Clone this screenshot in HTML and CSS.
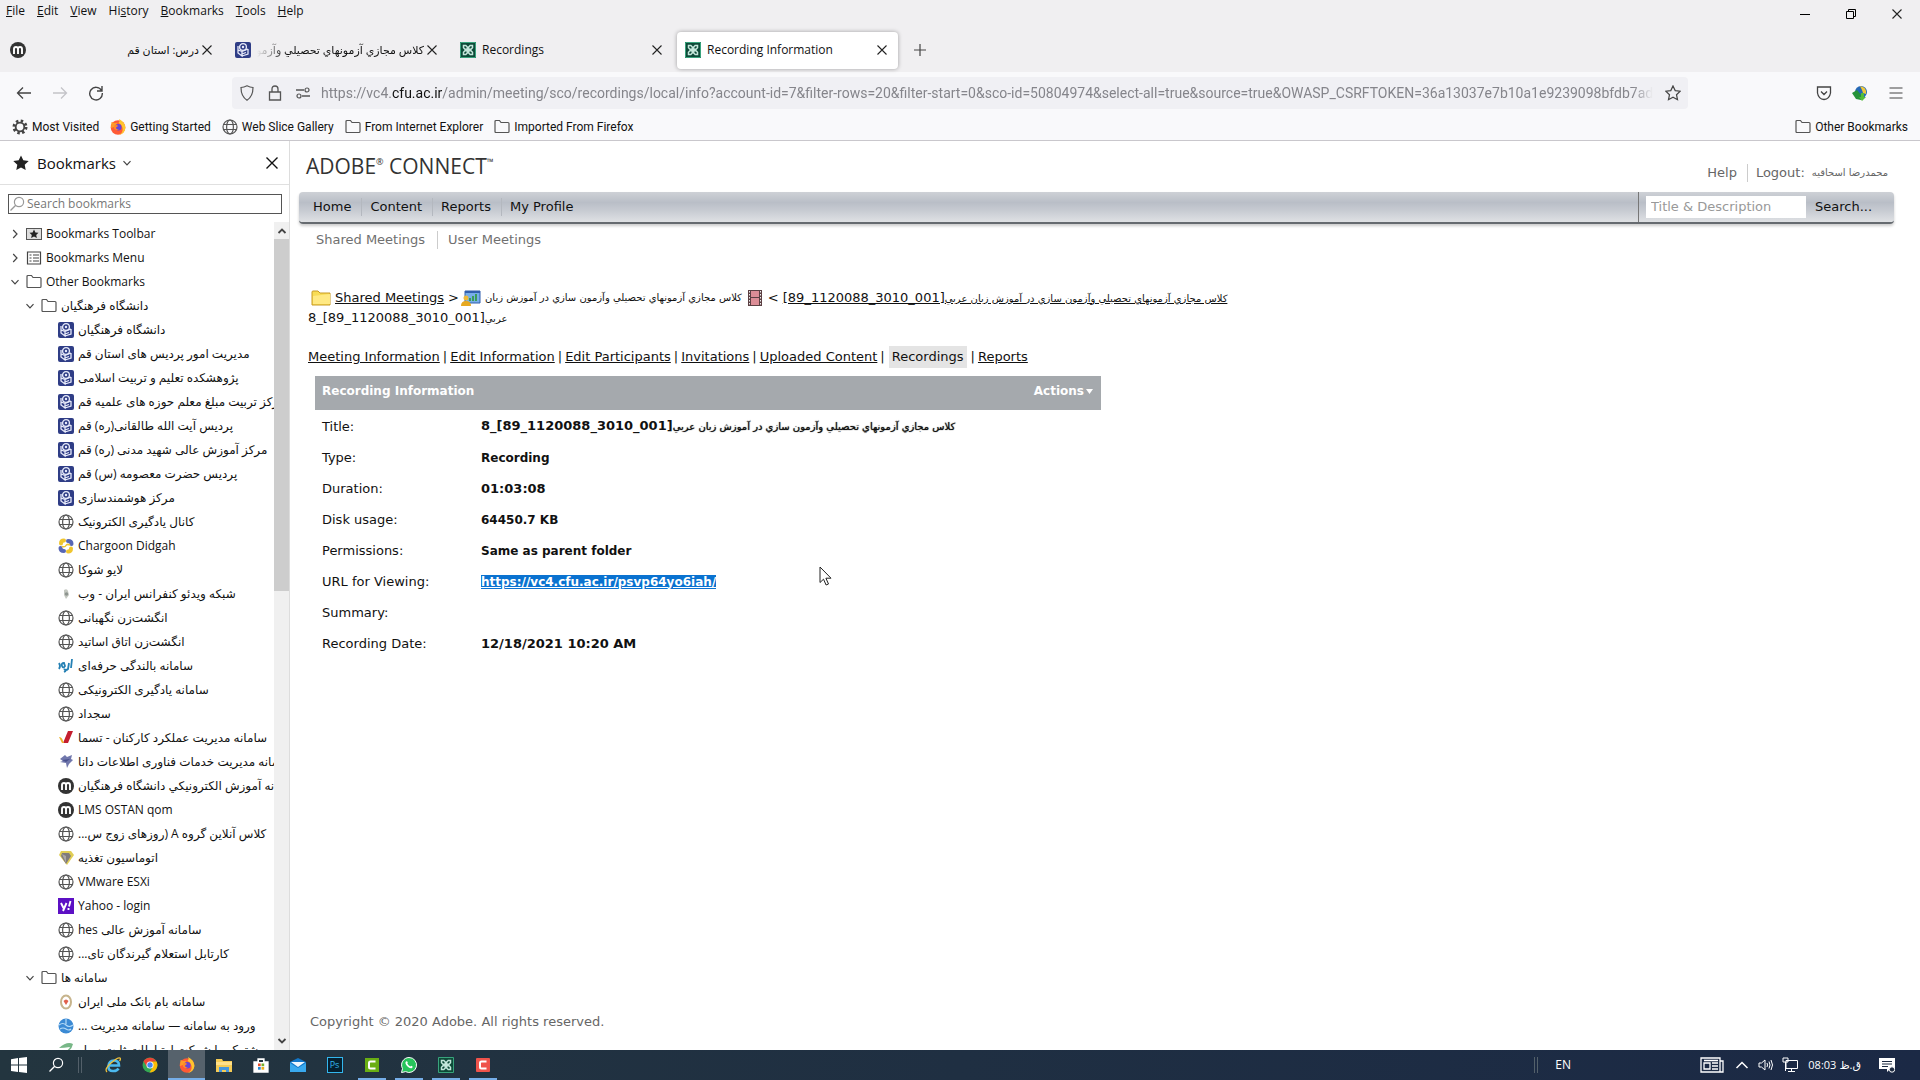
FILE: index.html
```html
<!DOCTYPE html>
<html lang="en">
<head>
<meta charset="utf-8">
<title>Recording Information</title>
<link rel="stylesheet" href="styles.css">
</head>
<body>
<svg class="defs" aria-hidden="true">
  <symbol id="globe" viewBox="0 0 16 16"><g fill="none" stroke="#555" stroke-width="1.2"><circle cx="8" cy="8" r="7"/><ellipse cx="8" cy="8" rx="3.4" ry="7"/><path d="M1.5 5.5h13M1.5 10.5h13"/></g></symbol>
  <symbol id="folder" viewBox="0 0 16 16"><path d="M1 12.5v-10q0-1 1-1h3.500l1.500 2h7q1 0 1 1v8q0 1-1 1H2q-1 0-1-1z" fill="none" stroke="#555" stroke-width="1.200"/></symbol>
  <symbol id="uni" viewBox="0 0 16 16"><rect width="16" height="16" rx="2" fill="#2f3d86"/><g fill="none" stroke="#e8ebfa" stroke-width="1.300"><circle cx="8" cy="5" r="3.400"/><path d="M3 4v7l4 3V9.500L3 8M13 7v5l-6 2M7 9.500l6-2.500M7 12l4-1.500"/></g><circle cx="8" cy="5" r="1.200" fill="#e8ebfa"/></symbol>
  <symbol id="moodle" viewBox="0 0 16 16"><circle cx="8" cy="8" r="8" fill="#333"/><path d="M4 12V7q0-2 2-2t2 2v5M8 7q0-2 2-2t2 2v5" fill="none" stroke="#fff" stroke-width="1.900"/></symbol>
  <symbol id="connect" viewBox="0 0 16 16"><rect width="16" height="16" fill="#0d4a38"/><path d="M.5.500h15v15H.5z" fill="none" stroke="#39a37d"/><g fill="none" stroke="#c3e6da" stroke-width="1.500"><path d="M7.300 7.300H5L3.500 5.800V3.500h2.300L7.300 5zM8.700 7.300H11l1.500-1.500V3.500h-2.300L8.700 5zM7.300 8.700H5l-1.500 1.500v2.300h2.300L7.300 11zM8.700 8.700H11l1.500 1.500v2.300h-2.300L8.700 11z"/></g></symbol>
  <symbol id="close" viewBox="0 0 16 16"><path d="M3.500 3.500l9 9M12.500 3.500l-9 9" stroke="#222" stroke-width="1.100"/></symbol>
  <symbol id="firefox" viewBox="0 0 16 16"><circle cx="8" cy="8.500" r="7.300" fill="#ff5a35"/><path d="M9 0q6 3 6.500 9-1 6-7 7 5-2 4-7-1-4-4-5 2-2 .5-4z" fill="#ffc52e"/><path d="M1.500 3l3 1 3-.3-1 2L4 8l-3 1z" fill="#ff9a28"/><circle cx="8.300" cy="8.300" r="3.200" fill="#6546d8"/><path d="M4 6.500q3-1 4 .5l-2 1.500q0 2 3 2-3 2-5-1z" fill="#ff8a26"/></symbol>
  <symbol id="down" viewBox="0 0 10 10"><path d="M1.500 3.200L5 6.800l3.500-3.600" fill="none" stroke="#444" stroke-width="1.200"/></symbol>
  <symbol id="right" viewBox="0 0 10 10"><path d="M3.200 1L7 5 3.200 9" fill="none" stroke="#444" stroke-width="1.200"/></symbol>
  <symbol id="lens" viewBox="0 0 16 16"><circle cx="10" cy="6" r="4.600" fill="none" stroke="currentColor" stroke-width="1.200"/><path d="M6.700 9.300L1.500 14.500" stroke="currentColor" stroke-width="1.300"/></symbol>
</svg>

<header class="chrome">
  <div class="topline">
    <nav class="menubar">
      <button><u>F</u>ile</button><button><u>E</u>dit</button><button><u>V</u>iew</button><button>Hi<u>s</u>tory</button><button><u>B</u>ookmarks</button><button><u>T</u>ools</button><button><u>H</u>elp</button>
    </nav>
    <div class="wincontrols">
      <button aria-label="Minimize"><svg viewBox="0 0 16 16"><path d="M3 8.500h10" stroke="#000"/></svg></button>
      <button aria-label="Restore"><svg viewBox="0 0 16 16"><path d="M3.500 5.500h7v7h-7zM5.500 5.500v-2h7v7h-2" fill="none" stroke="#000"/></svg></button>
      <button aria-label="Close"><svg><use href="#close"/></svg></button>
    </div>
  </div>
  <div class="tabs">
    <div class="tab"><svg><use href="#moodle"/></svg><span class="tabtitle" dir="rtl">درس: استان قم</span><button aria-label="Close tab"><svg><use href="#close"/></svg></button></div>
    <div class="tab"><svg><use href="#uni"/></svg><span class="tabtitle fade" dir="rtl">کلاس مجازي آزمونهاي تحصیلي وآزمون سازي</span><button aria-label="Close tab"><svg><use href="#close"/></svg></button></div>
    <div class="tab"><svg><use href="#connect"/></svg><span class="tabtitle">Recordings</span><button aria-label="Close tab"><svg><use href="#close"/></svg></button></div>
    <div class="tab active"><svg><use href="#connect"/></svg><span class="tabtitle">Recording Information</span><button aria-label="Close tab"><svg><use href="#close"/></svg></button></div>
    <button class="newtab" aria-label="New tab"><svg viewBox="0 0 16 16"><path d="M8 2v12M2 8h12" stroke="#444" stroke-width="1.200"/></svg></button>
  </div>
  <div class="navbar">
    <div class="navbuttons">
      <button aria-label="Back"><svg viewBox="0 0 16 16"><path d="M15 8H1.500M7 2.500L1.500 8 7 13.500" fill="none" stroke="#444" stroke-width="1.300"/></svg></button>
      <button aria-label="Forward"><svg viewBox="0 0 16 16"><path d="M1 8h13.500M9 2.500L14.500 8 9 13.500" fill="none" stroke="#c4c4c8" stroke-width="1.300"/></svg></button>
      <button aria-label="Reload"><svg viewBox="0 0 16 16"><path d="M13.500 5.500A6.300 6.300 0 1 0 14.300 8M14 1v5H9" fill="none" stroke="#444" stroke-width="1.400"/></svg></button>
    </div>
    <div class="urlbar">
      <svg viewBox="0 0 16 16"><path d="M8 .8q3 1.500 6 1.700 0 9-6 12.700Q2 11.500 2 2.500q3-.2 6-1.700z" fill="none" stroke="#555" stroke-width="1.200"/></svg>
      <svg viewBox="0 0 16 16"><path d="M2.500 7h11v8h-11zM5 7V4q0-3 3-3t3 3v3" fill="none" stroke="#555" stroke-width="1.300"/></svg>
      <svg viewBox="0 0 16 16"><path d="M1 5h8M7 11h8" stroke="#555" stroke-width="1.300"/><circle cx="12" cy="5" r="2" fill="none" stroke="#555" stroke-width="1.200"/><circle cx="4" cy="11" r="2" fill="none" stroke="#555" stroke-width="1.200"/></svg>
      <span class="url">https://vc4.<b>cfu.ac.ir</b>/admin/meeting/sco/recordings/local/info?account-id=7&amp;filter-rows=20&amp;filter-start=0&amp;sco-id=50804974&amp;select-all=true&amp;source=true&amp;OWASP_CSRFTOKEN=36a13037e7b10a1e9239098bfdb7ad5e</span>
      <svg viewBox="0 0 16 16"><path d="M8 .9l2.200 4.700 5 .6-3.700 3.500 1 5L8 12.200l-4.500 2.500 1-5L.8 6.200l5-.6z" fill="none" stroke="#444" stroke-width="1.200"/></svg>
    </div>
    <div class="navright">
      <button aria-label="Pocket"><svg viewBox="0 0 16 16"><path d="M1.500 2h13v6q-1 6-6.500 6.500Q2.500 14 1.500 8zM5 6.500l3 3 3-3" fill="none" stroke="#444" stroke-width="1.300"/></svg></button>
      <button aria-label="Download manager"><svg viewBox="0 0 16 16"><circle cx="9" cy="7" r="6" fill="#2568b5"/><path d="M8 1q7 1 6 8l-3-1-1-3z" fill="#f0c83a"/><path d="M0 8l5-3 4 5 3-1-3 6-5-1z" fill="#26933a"/><path d="M9 8h3v4h2l-4 4-3-4h2z" fill="#53bd3a"/></svg></button>
      <button aria-label="Menu"><svg viewBox="0 0 16 16"><path d="M1.500 3h13M1.500 8h13M1.500 13h13" stroke="#444" stroke-width="1.200"/></svg></button>
    </div>
  </div>
  <nav class="bookmarkbar">
    <a href="#"><svg viewBox="0 0 16 16"><circle cx="8" cy="8" r="6" fill="none" stroke="#444" stroke-width="3" stroke-dasharray="2.400 2.310"/><circle cx="8" cy="8" r="4.300" fill="none" stroke="#444" stroke-width="1.800"/></svg>Most Visited</a>
    <a href="#"><svg><use href="#firefox"/></svg>Getting Started</a>
    <a href="#"><svg><use href="#globe"/></svg>Web Slice Gallery</a>
    <a href="#"><svg><use href="#folder"/></svg>From Internet Explorer</a>
    <a href="#"><svg><use href="#folder"/></svg>Imported From Firefox</a>
    <a href="#" class="last"><svg><use href="#folder"/></svg>Other Bookmarks</a>
  </nav>
</header>

<div class="middle">
  <aside class="sidebar">
    <div class="sidehead">
      <svg viewBox="0 0 16 16"><path d="M8 .4l2.300 4.900 5.400.7-4 3.700 1 5.300L8 12.400 3.300 15l1-5.300-4-3.700 5.400-.7z" fill="#222"/></svg>
      <h2>Bookmarks</h2><svg class="tw"><use href="#down"/></svg>
      <button aria-label="Close sidebar"><svg viewBox="0 0 16 16"><path d="M2.500 2.500l11 11M13.500 2.500l-11 11" stroke="#111" stroke-width="1.400"/></svg></button>
    </div>
    <label class="sidesearch"><svg><use href="#lens"/></svg><input type="text" placeholder="Search bookmarks" aria-label="Search bookmarks"></label>
    <div class="treewrap">
      <ul class="tree">
        <li><svg class="tw"><use href="#right"/></svg><svg viewBox="0 0 16 16"><rect x=".5" y="2.500" width="15" height="11" fill="#ddd" stroke="#555"/><path d="M8 3.500l1.400 3 3.100.3-2.300 2.100.7 3.200L8 10.500l-2.900 1.600.7-3.200-2.300-2.100 3.100-.3z" fill="#222"/></svg>Bookmarks Toolbar</li>
        <li><svg class="tw"><use href="#right"/></svg><svg viewBox="0 0 16 16"><path d="M1.500 2h13v12h-13zM3.500 5h2M3.500 8h2M3.500 11h2M7 5h6M7 8h6M7 11h6" fill="none" stroke="#444" stroke-width="1.200"/></svg>Bookmarks Menu</li>
        <li><svg class="tw"><use href="#down"/></svg><svg><use href="#folder"/></svg>Other Bookmarks</li>
        <li class="l2"><svg class="tw"><use href="#down"/></svg><svg><use href="#folder"/></svg><span dir="rtl">دانشگاه فرهنگیان</span></li>
        <li class="l3"><svg><use href="#uni"/></svg><span dir="rtl">دانشگاه فرهنگیان</span></li>
        <li class="l3"><svg><use href="#uni"/></svg><span dir="rtl">مدیریت امور پردیس های استان قم</span></li>
        <li class="l3"><svg><use href="#uni"/></svg><span dir="rtl">پژوهشکده تعلیم و تربیت اسلامی</span></li>
        <li class="l3"><svg><use href="#uni"/></svg><span dir="rtl">مرکز تربیت مبلغ معلم حوزه های علمیه قم</span></li>
        <li class="l3"><svg><use href="#uni"/></svg><span dir="rtl">پردیس آیت الله طالقانی(ره) قم</span></li>
        <li class="l3"><svg><use href="#uni"/></svg><span dir="rtl">مرکز آموزش عالی شهید مدنی (ره) قم</span></li>
        <li class="l3"><svg><use href="#uni"/></svg><span dir="rtl">پردیس حضرت معصومه (س) قم</span></li>
        <li class="l3"><svg><use href="#uni"/></svg><span dir="rtl">مرکز هوشمندسازی</span></li>
        <li class="l3"><svg><use href="#globe"/></svg><span dir="rtl">کانال یادگیری الکترونیک</span></li>
        <li class="l3"><svg viewBox="0 0 16 16"><g fill="none" stroke-width="4" stroke-linecap="round"><path d="M3 5.500q0-3 3-3" stroke="#f0c52e"/><path d="M10 3q3.500 0 3.500 3" stroke="#5766b5"/><path d="M13 10.500q0 3-3 3" stroke="#f0c52e"/><path d="M6 13q-3.500 0-3.500-3" stroke="#5766b5"/></g><path d="M4 8.500q3 1 4-1t4-.5" fill="none" stroke="#f0c52e" stroke-width="1.500"/></svg>Chargoon Didgah</li>
        <li class="l3"><svg><use href="#globe"/></svg><span dir="rtl">لایو شوکا</span></li>
        <li class="l3"><svg viewBox="0 0 16 16"><path d="M6 4q3-2 4 1l1 4-3 4-2-4z" fill="#c3c7c0"/><circle cx="8.500" cy="8" r="1.700" fill="#8d948f"/></svg><span dir="rtl">شبکه ویدئو کنفرانس ایران - وب</span></li>
        <li class="l3"><svg><use href="#globe"/></svg><span dir="rtl">انگشت‌زن نگهبانی</span></li>
        <li class="l3"><svg><use href="#globe"/></svg><span dir="rtl">انگشت‌زن اتاق اساتید</span></li>
        <li class="l3"><svg viewBox="0 0 16 16"><path d="M14 1l-1 9M11 5l-1 6q-2 2-4 0M6 5q-3 0-2 3t3 0zM1 5q2 3 0 6M6 14l2-1" fill="none" stroke="#2580b4" stroke-width="1.800"/></svg><span dir="rtl">سامانه بالندگی حرفه‌ای</span></li>
        <li class="l3"><svg><use href="#globe"/></svg><span dir="rtl">سامانه یادگیری الکترونیکی</span></li>
        <li class="l3"><svg><use href="#globe"/></svg><span dir="rtl">سجداد</span></li>
        <li class="l3"><svg viewBox="0 0 16 16"><path d="M10 1h5l-5 12H5z" fill="#c41e2f"/><path d="M1 7q3 0 4 4l1 2H4z" fill="#eeb32c"/></svg><span dir="rtl">سامانه مدیریت عملکرد کارکنان - تسما</span></li>
        <li class="l3"><svg viewBox="0 0 16 16"><path d="M2 5l5-4 2 2 5-2-1 4 2 1-4 4-2 4-1-5-6-1 3-1z" fill="#7077ac"/><path d="M4 6l8-1-4 3z" fill="#48508e"/></svg><span dir="rtl">سامانه مدیریت خدمات فناوری اطلاعات دانا</span></li>
        <li class="l3"><svg><use href="#moodle"/></svg><span dir="rtl">سامانه آموزش الکترونیکي دانشگاه فرهنگیان</span></li>
        <li class="l3"><svg><use href="#moodle"/></svg>LMS OSTAN qom</li>
        <li class="l3"><svg><use href="#globe"/></svg><span dir="rtl">کلاس آنلاین گروه A (روزهای زوج س...</span></li>
        <li class="l3"><svg viewBox="0 0 16 16"><path d="M3 1h10l3 4-7 10L1 5z" fill="#e1ce55"/><path d="M4 3h7l2 3-5 8-5-8z" fill="#807b7c"/><path d="M4 4l4 2v7z" fill="#aaa6a5"/></svg><span dir="rtl">اتوماسیون تغذیه</span></li>
        <li class="l3"><svg><use href="#globe"/></svg>VMware ESXi</li>
        <li class="l3"><svg viewBox="0 0 16 16"><rect width="16" height="16" fill="#5c10c4"/><path d="M3 5l2.500 5M8.500 5L5 13M12.500 3L11 8.500M10.500 10v2" stroke="#fff" stroke-width="1.900"/></svg>Yahoo - login</li>
        <li class="l3"><svg><use href="#globe"/></svg><span dir="rtl">سامانه آموزش عالی hes</span></li>
        <li class="l3"><svg><use href="#globe"/></svg><span dir="rtl">کارتابل استعلام گیرندگان تای...</span></li>
        <li class="l2"><svg class="tw"><use href="#down"/></svg><svg><use href="#folder"/></svg><span dir="rtl">سامانه ها</span></li>
        <li class="l3"><svg viewBox="0 0 16 16"><ellipse cx="8" cy="8" rx="5" ry="6.500" fill="#fff" stroke="#c7b48c" stroke-width="2"/><path d="M5.500 7q2.500-3 5 0l-2.500 4z" fill="#e0604c"/></svg><span dir="rtl">سامانه بام بانک ملی ایران</span></li>
        <li class="l3"><svg viewBox="0 0 16 16"><circle cx="8" cy="8" r="7.500" fill="#3b8ad4"/><path d="M1 7q4-3 7 0t7 0M2 11q3-2 6 0t5 0M8 1v5" fill="none" stroke="#b6dcf8" stroke-width="1.200"/></svg><span dir="rtl">ورود به سامانه — سامانه مدیریت ...</span></li>
        <li class="l3"><svg viewBox="0 0 16 16"><path d="M1 6q8-7 14-4-2 8-9 8 5-2 6-5-6 1-11 1z" fill="#78b787"/></svg><span dir="rtl">مشترک ما شرکت ارتباطات ثابت سیار</span></li>
      </ul>
      <div class="scroll"><svg viewBox="0 0 10 10"><path d="M1.500 7L5 3.500 8.500 7" fill="none" stroke="#444" stroke-width="1.800"/></svg><i class="thumb"></i><svg viewBox="0 0 10 10"><path d="M1.500 3L5 6.500 8.500 3" fill="none" stroke="#444" stroke-width="1.800"/></svg></div>
    </div>
  </aside>

  <main class="page">
    <div class="brand">
      <h1>ADOBE<sup>®</sup> CONNECT<sup>™</sup></h1>
      <div class="account"><a href="#">Help</a><a href="#" class="logout">Logout:</a><span class="fa" dir="rtl">محمدرضا اسحاقیه</span></div>
    </div>
    <div class="mainnav">
      <nav><a href="#">Home</a><a href="#">Content</a><a href="#">Reports</a><a href="#">My Profile</a></nav>
      <form class="find"><input type="text" placeholder="Title &amp; Description" aria-label="Title &amp; Description"><button type="button">Search...</button></form>
    </div>
    <nav class="subnav"><a href="#">Shared Meetings</a><a href="#">User Meetings</a></nav>

    <div class="crumbs">
      <div class="crumbline">
        <svg class="ic" viewBox="0 0 20 16"><path d="M1 2q0-1 1-1h5l2 2h10v12H1z" fill="#f8dc55" stroke="#c79a25"/><path d="M2 6l17-2v10H2z" fill="#ffe983"/></svg>
        <a href="#">Shared Meetings</a><span class="gt">&gt;</span>
        <svg viewBox="0 0 20 16"><path d="M4 1h15v12H4z" fill="#77aee8" stroke="#315fae"/><path d="M4 2h15" stroke="#315fae" stroke-width="2"/><path d="M9 11V8M12 11V6M15 11V4" stroke="#3a9c58" stroke-width="2"/><circle cx="5" cy="8" r="2.500" fill="#efba39"/><path d="M0 16q0-5 5-5t5 5z" fill="#e7a920"/></svg>
        <span class="fa" dir="rtl">کلاس مجازي آزمونهاي تحصیلي وآزمون سازي در آموزش زبان</span>
        <svg class="film" viewBox="0 0 14 16"><path d="M0 0h14v16H0z" fill="#5c4043"/><path d="M3 1h8v6H3zM3 8h8v7H3z" fill="#dc8d96"/><path d="M1.500 1v15M12.500 1v15" stroke="#eee" stroke-dasharray="1.500 1.500"/></svg>
        <span>&lt;</span>
        <a href="#" class="mix"><span>[89_1120088_3010_001]</span><span class="fa" dir="rtl">کلاس مجازي آزمونهاي تحصیلي وآزمون سازي در آموزش زبان عربي</span></a>
      </div>
      <div class="crumbline"><span class="mix"><span>8_[89_1120088_3010_001]</span><span class="fa" dir="rtl">عربي</span></span></div>
    </div>

    <nav class="sections"><a href="#">Meeting Information</a><span>|</span><a href="#">Edit Information</a><span>|</span><a href="#">Edit Participants</a><span>|</span><a href="#">Invitations</a><span>|</span><a href="#">Uploaded Content</a><span>|</span><a href="#" class="here">Recordings</a><span>|</span><a href="#">Reports</a></nav>

    <section class="info">
      <div class="infohead"><h3>Recording Information</h3><button>Actions<svg viewBox="0 0 10 10"><path d="M2 3h7L5.500 8z" fill="#fff"/></svg></button></div>
      <table>
        <tr><th>Title:</th><td class="num"><span class="mix"><span>8_[89_1120088_3010_001]</span><span class="fa" dir="rtl">کلاس مجازي آزمونهاي تحصیلي وآزمون سازي در آموزش زبان عربي</span></span></td></tr>
        <tr><th>Type:</th><td>Recording</td></tr>
        <tr><th>Duration:</th><td class="num">01:03:08</td></tr>
        <tr><th>Disk usage:</th><td>64450.7 KB</td></tr>
        <tr><th>Permissions:</th><td>Same as parent folder</td></tr>
        <tr><th>URL for Viewing:</th><td><a href="#" class="selected">https://vc4.cfu.ac.ir/psvp64yo6iah/</a></td></tr>
        <tr><th>Summary:</th><td></td></tr>
        <tr><th>Recording Date:</th><td class="num">12/18/2021 10:20 AM</td></tr>
      </table>
    </section>
    <footer>Copyright © 2020 Adobe. All rights reserved.</footer>
    <svg class="pointer" viewBox="0 0 13 20"><path d="M1 1v15.500l3.500-3.300 2.600 5.800 2.400-1-2.600-5.800H12z" fill="#fff" stroke="#222"/></svg>
  </main>
</div>

<div class="taskbar">
  <div class="apps">
    <button aria-label="Start"><svg viewBox="0 0 16 16"><path d="M0 2.200L7 1v6.600H0zM8 .9L16 0v7.600H8zM0 8.500h7V15l-7-1zM8 8.500h8V16l-8-1z" fill="#fff"/></svg></button>
    <button aria-label="Search"><svg><use href="#lens"/></svg></button>
    <i class="grip"></i>
    <button aria-label="Internet Explorer"><svg viewBox="0 0 16 16"><path d="M3.500 8.500H14Q14 3.500 9 3.500T3.500 9t5.200 5q3.300 0 4.800-2.500" fill="none" stroke="#4cb9ee" stroke-width="2.600"/><path d="M2 15q-3-3 4-9t9-5q1 1-.5 3" fill="none" stroke="#f0c23c" stroke-width="1.300"/></svg></button>
    <button aria-label="Chrome"><svg viewBox="0 0 16 16"><circle cx="8" cy="8" r="7.500" fill="#34a853"/><path d="M1.500 4.300A7.500 7.500 0 0 1 14.500 4.500L8 5l-3 5z" fill="#ea4335"/><path d="M14.500 4.500A7.500 7.500 0 0 1 7.500 15.500L11 10 9 4.700z" fill="#fbbc05"/><circle cx="8" cy="8" r="3.500" fill="#fff"/><circle cx="8" cy="8" r="2.700" fill="#4285f4"/></svg></button>
    <button class="current" aria-label="Firefox"><svg><use href="#firefox"/></svg></button>
    <button aria-label="File Explorer"><svg viewBox="0 0 16 16"><path d="M0 2h6l1 2h9v11H0z" fill="#f5cb55"/><path d="M0 5h16v3H0z" fill="#ffe08a"/><path d="M3 15v-5h10v5h-3v-2H6v2z" fill="#4697dd"/></svg></button>
    <button aria-label="Store"><svg viewBox="0 0 16 16"><path d="M1 5h14v10H1zM5 5V2h6v3" fill="#fff" stroke="#fff" stroke-width="1.300"/><path d="M6 3h4v2H6z" fill="#23343f"/><path d="M5 6.500h2.700v2.700H5z" fill="#e84c28"/><path d="M8.500 6.500h2.700v2.700H8.500z" fill="#77b02a"/><path d="M5 10h2.700v2.700H5z" fill="#2388d4"/><path d="M8.500 10h2.700v2.700H8.500z" fill="#f0ae1b"/></svg></button>
    <button aria-label="Mail"><svg viewBox="0 0 16 16"><path d="M0 5l8-4 8 4v10H0z" fill="#1277c9"/><path d="M1 5h14L8 10z" fill="#eef7ff"/><path d="M0 6l8 5 8-5v9H0z" fill="#39a9ee"/></svg></button>
    <button aria-label="Photoshop"><span class="ps">Ps</span></button>
    <button class="open" aria-label="Camtasia"><svg viewBox="0 0 16 16"><rect x="1" y="1" width="14" height="14" fill="#69ae13"/><path d="M11.500 4.500H6.500q-1.500 0-1.500 1.500v4q0 1.500 1.500 1.500h5" fill="none" stroke="#fff" stroke-width="2"/></svg></button>
    <button class="open" aria-label="WhatsApp"><svg viewBox="0 0 16 16"><path d="M8 .5A7.500 7.500 0 1 1 4.500 14.600L.5 15.600l1-4A7.500 7.500 0 0 1 8 .5z" fill="#27c45b" stroke="#fff"/><path d="M5 4.500q1-1 1.800 1l-.5 1q1 2 3 3l1-.8q2.300.8.7 2.300Q9 12 6 9 3.500 6 5 4.500z" fill="#fff"/></svg></button>
    <button class="open" aria-label="Adobe Connect"><svg><use href="#connect"/></svg></button>
    <button class="open" aria-label="Recorder"><svg viewBox="0 0 16 16"><rect x="1" y="1" width="14" height="14" rx="1" fill="#ef534b"/><path d="M11.500 4.500H6.500q-1.500 0-1.500 1.500v4q0 1.500 1.500 1.500h5" fill="none" stroke="#fff" stroke-width="2"/></svg></button>
  </div>
  <div class="tray">
    <i class="grip"></i><span class="lang">EN</span>
    <svg class="wide" viewBox="0 0 24 16"><path d="M1 1h19v14H1zM20 4h3v11h-3M4 6h6v6H4zM12 6h6M12 9h6M12 12h6M4 3.500h14" fill="none" stroke="#fff" stroke-width="1.300"/></svg>
    <svg viewBox="0 0 16 16"><path d="M2.500 11L8 5.500l5.500 5.500" fill="none" stroke="#fff" stroke-width="1.500"/></svg>
    <svg viewBox="0 0 16 16"><path d="M1 6h2.500L7 3v10l-3.500-3H1zM9 6q1 2 0 4M11 4.500q2 3.500 0 7M13 3q3 5 0 10" fill="none" stroke="#fff"/></svg>
    <svg viewBox="0 0 16 16"><path d="M4 3.500h11.500v8H4zM9.500 12v2.500M6 14.500h7M1 1h5v4H1zM3.500 5v9" fill="none" stroke="#fff"/></svg>
    <span class="clock"><span>08:03</span><span dir="rtl">ق.ظ</span></span>
    <svg viewBox="0 0 16 16"><path d="M0 1h16v11h-5l-3 3v-3H0z" fill="#fff"/><path d="M3 4.500h10M3 7h10M3 9.500h6" stroke="#1c2a40"/><circle cx="13" cy="12.500" r="2.700" fill="#1c2a40" stroke="#fff"/></svg>
  </div>
</div>
</body>
</html>
```
FILE: styles.css
```css
* { box-sizing: border-box; }
body {
  margin: 0;
  height: 100vh;
  display: flex;
  flex-direction: column;
  overflow: hidden;
  background: #fff;
  color: #111;
  font: 12px/16px "Open Sans", "DejaVu Sans", sans-serif;
}
button { border: 0; padding: 0; background: none; font: inherit; color: inherit; display: flex; align-items: center; justify-content: center; }
a { color: inherit; text-decoration: none; }
svg { width: 16px; height: 16px; flex: none; }
h1, h2, h3 { margin: 0; font-weight: 400; }
.defs { position: absolute; width: 0; height: 0; }
.tw { width: 10px; height: 10px; }

/* Browser chrome */
.chrome { flex: none; background: #f9f9fb; border-bottom: 1px solid #c9c7cc; }
.topline { display: flex; justify-content: space-between; height: 28px; background: #f0eff1; }
.menubar { display: flex; gap: 12px; padding: 3px 6px 1px; height: 20px; }
.wincontrols { display: flex; align-items: center; gap: 30px; padding-right: 15px; }
.tabs { display: flex; align-items: center; height: 44px; background: #f0eff1; padding-left: 2px; gap: 4px; }
.tab { display: flex; align-items: center; gap: 6px; width: 221px; height: 37px; padding: 0 8px; border-radius: 4px; }
.tab.active { background: #fff; box-shadow: 0 0 4px rgba(0,0,0,.35); }
.tabtitle { flex: 1; min-width: 0; overflow: hidden; white-space: nowrap; }
.tabtitle[dir] { margin-right: -6px; font-size: 11px; }
.fade { -webkit-mask-image: linear-gradient(to right, transparent, #000 30px); mask-image: linear-gradient(to right, transparent, #000 30px); }
.newtab { width: 36px; height: 32px; }
.navbar { display: flex; align-items: center; height: 42px; }
.navbuttons { display: flex; gap: 20px; width: 232px; padding-left: 16px; }
.urlbar { flex: 1; min-width: 0; display: flex; align-items: center; gap: 12px; height: 32px; padding: 0 7px; background: #f0f0f4; border-radius: 4px; }
.url { flex: 1; min-width: 0; overflow: hidden; white-space: nowrap; font: 14px/20px Roboto, sans-serif; color: #85858b; margin-left: -2px; -webkit-mask-image: linear-gradient(to left, transparent, #000 20px); mask-image: linear-gradient(to left, transparent, #000 20px); }
.url b { font-weight: 400; color: #111; }
.navright { display: flex; gap: 20px; justify-content: flex-end; width: 232px; padding-right: 16px; }
.bookmarkbar { display: flex; align-items: center; gap: 11px; height: 26px; padding: 0 12px; font-family: Roboto, sans-serif; }
.bookmarkbar a { display: flex; align-items: center; gap: 4px; }
.bookmarkbar .last { margin-left: auto; }

/* Sidebar */
.middle { flex: 1; min-height: 0; display: flex; }
.sidebar { width: 290px; flex: none; display: flex; flex-direction: column; border-right: 1px solid #ddd; }
.sidehead { display: flex; align-items: center; gap: 6px; height: 44px; padding: 0 9px 0 13px; border-bottom: 1px solid #e0e0e0; }
.sidehead h2 { font-size: 15px; line-height: 20px; margin-left: 2px; }
.sidehead button { margin-left: auto; }
.sidesearch { display: flex; align-items: center; gap: 2px; height: 20px; margin: 9px 7px 8px 8px; border: 1px solid #555; color: #999; }
.sidesearch input { flex: 1; min-width: 0; border: 0; padding: 0; background: none; font: inherit; }
.sidesearch input::placeholder { color: #777; opacity: 1; }
.treewrap { flex: 1; min-height: 0; display: flex; }
.tree { flex: 1; min-width: 0; overflow: hidden; margin: 0; padding: 0; list-style: none; }
.tree li { display: flex; align-items: center; gap: 4px; height: 24px; padding-left: 10px; white-space: nowrap; }
.tree .tw { margin-right: 2px; }
.tree .l2 { padding-left: 25px; }
.tree .l3 { padding-left: 58px; }
.tree span { flex: none; }
.scroll { width: 15px; flex: none; display: flex; flex-direction: column; align-items: center; padding: 4px 0; background: #f0f0f0; }
.scroll svg { width: 10px; height: 10px; }
.thumb { width: 15px; flex: 0 0 352px; margin: 3px 0 auto; background: #cdcdcd; }

/* Connect page */
.page { flex: 1; min-width: 0; position: relative; display: flex; flex-direction: column; padding: 0 26px 18px 9px; font: 13px/18px "DejaVu Sans", sans-serif; }
.page .fa { font-size: 10px; }
.brand { display: flex; justify-content: space-between; height: 51px; padding: 12px 6px 0 7px; }
.brand h1 { font: 21px/26px "Open Sans", sans-serif; color: #333; }
.brand sup { font-size: 9px; line-height: 10px; vertical-align: 9px; }
.account { display: flex; align-items: center; color: #666; gap: 7px; height: 40px; }
.account .logout { border-left: 1px solid #ccc; padding-left: 8px; margin-left: 3px; }
.mainnav { display: flex; justify-content: space-between; height: 32px; border-bottom: 2px solid #666b70; border-radius: 4px; background: linear-gradient(#ced1d6, #b9bec7 35%, #c6cad1 60%, #dfe1e4); box-shadow: 0 2px 3px rgba(0,0,0,.2); }
.mainnav nav { display: flex; align-items: center; padding: 0 6px; }
.mainnav nav a { padding: 0 10px 0 8px; border-right: 1px solid #b4b8bf; }
.mainnav nav a:last-child { border: 0; }
.find { display: flex; align-items: center; gap: 9px; width: 256px; padding-left: 7px; border-left: 1px solid #777; }
.find input { width: 160px; height: 22px; border: 0; padding: 0 5px 2px; font: inherit; }
.find input::placeholder { color: #999; opacity: 1; }
.subnav { display: flex; padding: 7px 7px 5px; color: #707070; }
.subnav a { padding: 0 12px 0 10px; }
.subnav a + a { border-left: 1px solid #ccc; }
.crumbs { padding: 34px 0 0 9px; }
.crumbline { display: flex; align-items: center; height: 20px; gap: 4px; }
.crumbline a, .sections a { text-decoration: underline; }
.crumbline svg { width: 20px; }
.crumbline .ic { margin-left: 3px; }
.crumbline .gt { margin-right: -2px; }
.crumbline .film { width: 14px; margin: 0 2px; }
.mix { display: flex; align-items: baseline; white-space: nowrap; }
.sections { display: flex; align-items: center; gap: 3px; padding: 18px 9px 9px; height: 48px; }
.sections .here { text-decoration: none; background: #e4e4e4; padding: 2px 3px; margin: 0 1px; }
.info { width: 786px; max-width: 100%; margin-left: 16px; }
.infohead { display: flex; justify-content: space-between; align-items: flex-start; height: 34px; padding: 6px 7px; background: #a5a9ad; color: #fff; }
.infohead h3, .infohead button { font: bold 12px/18px "DejaVu Sans", sans-serif; }
.infohead svg { width: 10px; height: 10px; }
table { border-collapse: collapse; margin-top: 1px; width: 100%; }
tr { height: 31px; }
th { width: 166px; padding: 0 0 0 7px; font-weight: 400; text-align: left; }
td { padding: 0; font-size: 12px; font-weight: 700; }
td.num { font-size: 13px; }
td .fa { font-weight: 400; text-shadow: 0 0 1px #111; }
.selected { background: #0a72d0; color: #fff; text-decoration: underline; }
footer { margin-top: auto; padding-left: 11px; color: #666; line-height: 20px; }
.pointer { position: absolute; left: 529px; top: 425px; width: 13px; height: 20px; }

/* Taskbar */
.taskbar { flex: none; display: flex; justify-content: space-between; height: 30px; background: linear-gradient(to right, #23353f, #1b2945); color: #fff; }
.apps { display: flex; }
.apps button { width: 37px; height: 30px; }
.apps .current { background: #56626c; box-shadow: inset 0 -2px #76aee8; }
.apps .open { background: linear-gradient(#76aee8, #76aee8) center bottom / 28px 2px no-repeat; }
.grip { width: 4px; height: 16px; margin: 7px 9px; border: solid #53606a; border-width: 0 1px; }
.apps .grip { margin: 7px 12px 7px 4px; }
.ps { width: 16px; height: 16px; border: 1px solid #33b7ee; background: #06202f; color: #33b7ee; font-size: 9px; line-height: 14px; }
.tray { display: flex; align-items: center; gap: 8px; padding-right: 25px; }
.tray .lang { width: 137px; }
.tray .wide { width: 24px; margin-right: 2px; }
.clock { display: flex; gap: 3px; margin: 0 10px 0 2px; font-size: 11px; }
```
